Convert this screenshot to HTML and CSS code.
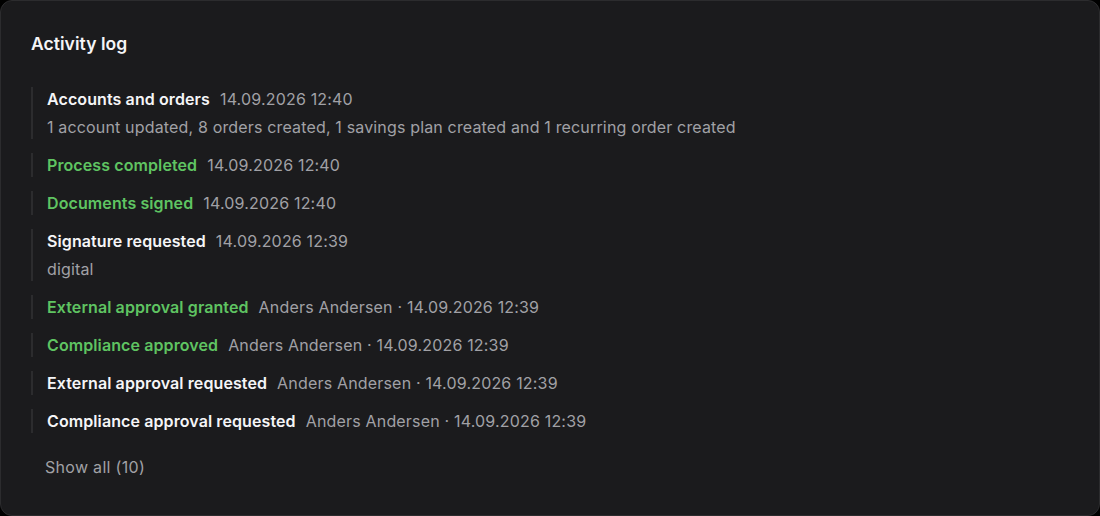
FILE: index.html
```html
<!DOCTYPE html>
<html lang="en">
<head>
    <meta charset="UTF-8">
    <meta name="viewport" content="width=device-width, initial-scale=1.0">
    <title>Activity log</title>
    <link rel="stylesheet" href="styles.css">
</head>
<body>
    <div class="card">
        <h2 class="card-title">Activity log</h2>
        <ul class="log">
            <li class="log-item">
                <div class="log-head"><span class="log-name">Accounts and orders</span><span class="log-meta">14.09.2026 12:40</span></div>
                <div class="log-desc">1 account updated, 8 orders created, 1 savings plan created and 1 recurring order created</div>
            </li>
            <li class="log-item">
                <div class="log-head"><span class="log-name green">Process completed</span><span class="log-meta">14.09.2026 12:40</span></div>
            </li>
            <li class="log-item">
                <div class="log-head"><span class="log-name green">Documents signed</span><span class="log-meta">14.09.2026 12:40</span></div>
            </li>
            <li class="log-item">
                <div class="log-head"><span class="log-name">Signature requested</span><span class="log-meta">14.09.2026 12:39</span></div>
                <div class="log-desc">digital</div>
            </li>
            <li class="log-item">
                <div class="log-head"><span class="log-name green">External approval granted</span><span class="log-meta">Anders Andersen · 14.09.2026 12:39</span></div>
            </li>
            <li class="log-item">
                <div class="log-head"><span class="log-name green">Compliance approved</span><span class="log-meta">Anders Andersen · 14.09.2026 12:39</span></div>
            </li>
            <li class="log-item">
                <div class="log-head"><span class="log-name">External approval requested</span><span class="log-meta">Anders Andersen · 14.09.2026 12:39</span></div>
            </li>
            <li class="log-item">
                <div class="log-head"><span class="log-name">Compliance approval requested</span><span class="log-meta">Anders Andersen · 14.09.2026 12:39</span></div>
            </li>
        </ul>
        <button class="show-all" type="button">Show all (10)</button>
    </div>
</body>
</html>
```

FILE: styles.css
```css
*{
    box-sizing: border-box;
}
html, body{
    margin: 0;
    height: 100%;
    background: #000;
}
body{
    font-family: Inter, "Noto Sans", sans-serif;
    color: #f5f5f7;
}
.card{
    height: 516px;
    background: #1b1b1d;
    border: 1px solid #2c2c2e;
    border-radius: 12px;
    padding: 31px 30px 0;
}
.card-title{
    margin: 0;
    font-size: 17.5px;
    font-weight: 600;
    line-height: 24px;
    letter-spacing: 0.05px;
}
.log{
    list-style: none;
    margin: 31px 0 0;
    padding: 0;
    display: flex;
    flex-direction: column;
    gap: 14px;
}
.log-item{
    border-left: 2px solid #2c2c2e;
    padding-left: 14px;
    font-size: 16px;
    line-height: 24px;
    letter-spacing: 0.16px;
}
.log-head{
    display: flex;
    gap: 10px;
}
.log-name{
    font-weight: 600;
    color: #f5f5f7;
    letter-spacing: 0.1px;
}
.log-name.green{
    color: #5fc462;
}
.log-meta{
    color: #a1a1a6;
    letter-spacing: 0.18px;
}
.log-desc{
    margin-top: 4px;
    color: #a1a1a6;
}
.show-all{
    margin: 22px 0 0 14px;
    padding: 0;
    border: none;
    background: none;
    font-family: inherit;
    font-size: 16px;
    line-height: 24px;
    letter-spacing: 0.3px;
    color: #a1a1a6;
    cursor: pointer;
}
```
